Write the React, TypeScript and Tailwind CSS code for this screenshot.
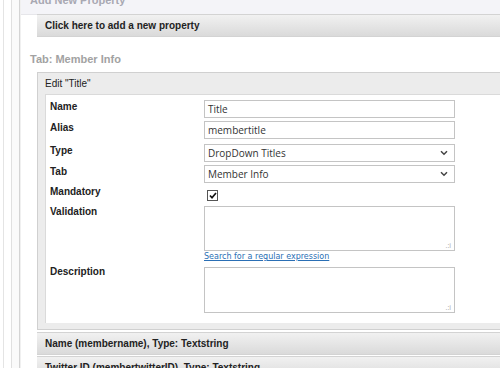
import React from 'react';

const boldFont = { fontFamily: '"Liberation Sans", Arial, sans-serif' };

function Row({ label, children, className = '' }: { label: string; children: React.ReactNode; className?: string }) {
  return (
    <div className={`flex ${className}`}>
      <div className="w-[158px] shrink-0 pl-[4px] text-[10px] font-bold leading-[14px] text-[#222]" style={boldFont}>
        {label}
      </div>
      <div className="flex flex-col">{children}</div>
    </div>
  );
}

function Chevron() {
  return (
    <svg width="8" height="6" viewBox="0 0 8 6" className="mr-[6px]">
      <path d="M1 1.2l3 3 3-3" fill="none" stroke="#444" strokeWidth="1.5" />
    </svg>
  );
}

function Bar({ text, className = '' }: { text: string; className?: string }) {
  return (
    <div
      className={`ml-[16px] flex h-[23px] items-center border-y border-[#d3d3d3] bg-gradient-to-b from-[#f1f1f1] to-[#dadada] pl-[8px] ${className}`}
    >
      <span className="whitespace-nowrap text-[10px] font-bold text-[#222]" style={boldFont}>
        {text}
      </span>
    </div>
  );
}

export default function App() {
  const inputCls =
    'w-[251px] h-[18px] border border-[#c4c4c4] bg-white pl-[3px] text-[10px] text-[#333] flex items-center';
  return (
    <div className="flex h-[368px] w-[500px] overflow-hidden bg-white" style={{ fontFamily: '"Open Sans", sans-serif' }}>
      {/* left gutter */}
      <div className="flex shrink-0">
        <div className="w-[3px]" />
        <div className="w-px bg-[#e4e4e4]" />
        <div className="w-[7px]" />
        <div className="w-px bg-[#e0e0e0]" />
        <div className="w-[7px] bg-[#fafafa]" />
        <div className="w-px bg-[#d4d4d4]" />
        <div className="w-px bg-[#f0f0f0]" />
      </div>

      <div className="min-w-0 flex-1">
        {/* Add New Property */}
        <div className="h-[15px] overflow-hidden border-b border-[#e6e6ea] bg-[#f4f4f8] pl-[9px]">
          <div className="-mt-[6px] whitespace-nowrap text-[11px] font-bold leading-[13px] text-[#a8a8b2]" style={boldFont}>
            Add New Property
          </div>
        </div>
        <Bar text="Click here to add a new property" className="-mt-px" />

        <div className="mt-[16px] pl-[9px] text-[11px] font-bold leading-[13px] text-[#a2a2a2]" style={boldFont}>
          Tab: Member Info
        </div>

        {/* Edit box */}
        <div className="ml-[16px] mt-[6px] border border-r-0 border-[#d0d0d0] bg-[#ececec] pb-[6px]">
          <div className="flex h-[21px] items-center pl-[7px] text-[10px] text-[#222]" style={boldFont}>
            Edit "Title"
          </div>
          <div className="ml-[7px] border-l border-t border-[#dadada] bg-white pb-[10px] pt-[5px]">
            <Row label="Name">
              <div className={inputCls}>Title</div>
            </Row>
            <Row label="Alias" className="mt-[3px]">
              <div className={inputCls}>membertitle</div>
            </Row>
            <Row label="Type" className="mt-[5px]">
              <div className={`${inputCls} justify-between`}>
                <span>DropDown Titles</span>
                <Chevron />
              </div>
            </Row>
            <Row label="Tab" className="mt-[3px]">
              <div className={`${inputCls} justify-between`}>
                <span>Member Info</span>
                <Chevron />
              </div>
            </Row>
            <Row label="Mandatory" className="mt-[2px]">
              <div className="ml-[3px] mt-[5px] flex h-[11px] w-[11px] items-center justify-center border border-[#555] bg-white">
                <svg width="8" height="7" viewBox="0 0 8 7">
                  <path d="M1 3.5l2 2.2L7 1" fill="none" stroke="#111" strokeWidth="1.7" />
                </svg>
              </div>
            </Row>
            <Row label="Validation" className="mt-[4px]">
              <div className="relative mt-[1px] h-[45px] w-[251px] border border-[#c4c4c4] bg-white">
                <span className="absolute bottom-[1px] right-[3px] text-[7px] leading-none text-[#aaa]">.:i</span>
              </div>
              <a
                className="mt-[1px] text-[8px] leading-[10px] text-[#2a6fb5] underline"
                style={{ fontFamily: '"DejaVu Sans", Verdana, sans-serif' }}
              >
                Search for a regular expression
              </a>
            </Row>
            <Row label="Description" className="mt-[3px]">
              <div className="relative mt-[2px] h-[46px] w-[251px] border border-[#c4c4c4] bg-white">
                <span className="absolute bottom-[1px] right-[3px] text-[7px] leading-none text-[#aaa]">.:i</span>
              </div>
            </Row>
          </div>
        </div>

        {/* collapsed properties */}
        <Bar text="Name (membername), Type: Textstring" className="mt-[2px]" />
        <Bar text="Twitter ID (membertwitterID), Type: Textstring" className="mt-px" />
      </div>
    </div>
  );
}
